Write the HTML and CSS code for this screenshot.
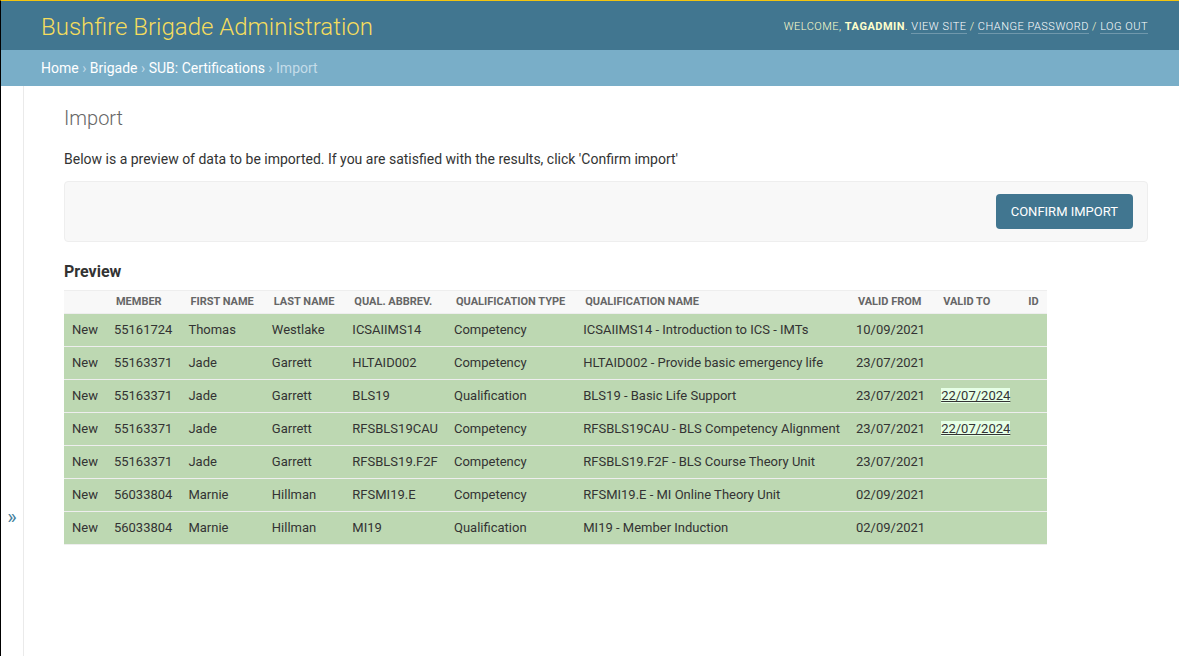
FILE: index.html
```html
<!DOCTYPE html>
<html lang="en">
<head>
<meta charset="utf-8">
<title>Import | Bushfire Brigade Administration</title>
<link rel="stylesheet" href="styles.css">
</head>
<body>
<div class="page">
  <header class="header">
    <h1 class="site-name">Bushfire Brigade Administration</h1>
    <div class="user-tools">Welcome, <strong>tagadmin</strong>. <a href="#">View site</a> / <a href="#">Change password</a> / <a href="#">Log out</a></div>
  </header>
  <nav class="breadcrumbs"><a href="#">Home</a> › <a href="#">Brigade</a> › <a href="#">SUB: Certifications</a> › Import</nav>
  <div class="main">
    <div class="nav-toggle"><span class="toggle-btn">»</span></div>
    <div class="content">
      <h1 class="page-title">Import</h1>
      <p class="intro">Below is a preview of data to be imported. If you are satisfied with the results, click 'Confirm import'</p>
      <div class="submit-row"><button class="confirm" type="button">Confirm import</button></div>
      <h2 class="preview-title">Preview</h2>
      <table class="import-preview">
        <thead>
          <tr><th></th><th>Member</th><th>First name</th><th>Last name</th><th>Qual. abbrev.</th><th>Qualification type</th><th>Qualification name</th><th>Valid from</th><th>Valid to</th><th class="last">ID</th></tr>
        </thead>
        <tbody>
          <tr class="new"><td>New</td><td>55161724</td><td>Thomas</td><td>Westlake</td><td>ICSAIIMS14</td><td>Competency</td><td>ICSAIIMS14 - Introduction to ICS - IMTs</td><td>10/09/2021</td><td></td><td></td></tr>
          <tr class="new"><td>New</td><td>55163371</td><td>Jade</td><td>Garrett</td><td>HLTAID002</td><td>Competency</td><td>HLTAID002 - Provide basic emergency life</td><td>23/07/2021</td><td></td><td></td></tr>
          <tr class="new"><td>New</td><td>55163371</td><td>Jade</td><td>Garrett</td><td>BLS19</td><td>Qualification</td><td>BLS19 - Basic Life Support</td><td>23/07/2021</td><td><ins class="diff">22/07/2024</ins></td><td></td></tr>
          <tr class="new"><td>New</td><td>55163371</td><td>Jade</td><td>Garrett</td><td>RFSBLS19CAU</td><td>Competency</td><td>RFSBLS19CAU - BLS Competency Alignment</td><td>23/07/2021</td><td><ins class="diff">22/07/2024</ins></td><td></td></tr>
          <tr class="new"><td>New</td><td>55163371</td><td>Jade</td><td>Garrett</td><td>RFSBLS19.F2F</td><td>Competency</td><td>RFSBLS19.F2F - BLS Course Theory Unit</td><td>23/07/2021</td><td></td><td></td></tr>
          <tr class="new"><td>New</td><td>56033804</td><td>Marnie</td><td>Hillman</td><td>RFSMI19.E</td><td>Competency</td><td>RFSMI19.E - MI Online Theory Unit</td><td>02/09/2021</td><td></td><td></td></tr>
          <tr class="new"><td>New</td><td>56033804</td><td>Marnie</td><td>Hillman</td><td>MI19</td><td>Qualification</td><td>MI19 - Member Induction</td><td>02/09/2021</td><td></td><td></td></tr>
        </tbody>
      </table>
    </div>
  </div>
</div>
</body>
</html>
```
FILE: styles.css
```css
html, body {
  margin: 0;
  padding: 0;
}

body {
  border-top: 1px solid #f2c40f;
  border-left: 1px solid #000;
  font-family: Roboto, "Liberation Sans", sans-serif;
  font-size: 14px;
  color: #333;
  background: #fff;
  min-height: calc(100vh - 1px);
  box-sizing: border-box;
}

a {
  text-decoration: none;
}

.header {
  display: flex;
  justify-content: space-between;
  align-items: center;
  height: 49px;
  padding: 0 31px 0 40px;
  background: #417690;
  color: #ffc;
}

.site-name {
  margin: 0;
  font-size: 24px;
  font-weight: 300;
  color: #f5dd5d;
  line-height: 28px;
  padding-top: 2px;
}

.user-tools {
  font-size: 11px;
  font-weight: 300;
  letter-spacing: 0.5px;
  text-transform: uppercase;
  color: #ffc;
  padding-top: 2px;
}

.user-tools strong {
  font-weight: 700;
}

.user-tools a {
  color: #fff;
  border-bottom: 1px solid rgba(255, 255, 255, 0.25);
}

.breadcrumbs {
  height: 36px;
  box-sizing: border-box;
  padding: 9px 31px 0 40px;
  background: #79aec8;
  color: #c4dce8;
  font-size: 14px;
  line-height: 18px;
}

.breadcrumbs a {
  color: #fff;
}

.main {
  display: flex;
  min-height: calc(100vh - 87px);
}

.nav-toggle {
  flex: 0 0 23px;
  box-sizing: border-box;
  border-right: 1px solid #eaeaea;
  display: flex;
  justify-content: center;
  padding-top: 420px;
}

.toggle-btn {
  font-size: 20px;
  line-height: 23px;
  height: 23px;
  color: #447e9b;
}

.content {
  flex: 1;
  padding: 20px 31px 20px 40px;
}

.page-title {
  margin: 0 0 20px;
  font-size: 20px;
  font-weight: 300;
  color: #666;
  line-height: normal;
}

.intro {
  margin: 0.2em 0 0.8em;
  line-height: 140%;
}

.submit-row {
  display: flex;
  justify-content: flex-end;
  padding: 12px 14px;
  margin: 0 0 20px;
  background: #f8f8f8;
  border: 1px solid #eee;
  border-radius: 4px;
}

.confirm {
  background: #417690;
  color: #fff;
  border: 0;
  border-radius: 4px;
  padding: 10px 15px;
  font-family: Roboto, "Liberation Sans", sans-serif;
  font-size: 13px;
  font-weight: 400;
  line-height: 15px;
  text-transform: uppercase;
  cursor: pointer;
}

.preview-title {
  margin: 16px 0 9px;
  font-size: 16px;
  font-weight: 700;
  color: #333;
}

.import-preview {
  border-collapse: collapse;
}

.import-preview th,
.import-preview td {
  text-align: left;
  vertical-align: top;
}

.import-preview thead th {
  padding: 5px 10px;
  font-size: 11px;
  line-height: 12px;
  font-weight: 700;
  color: #666;
  text-transform: uppercase;
  background: #f8f8f8;
  border-top: 1px solid #eee;
  border-bottom: 1px solid #eee;
  white-space: nowrap;
}

.import-preview thead th.last {
  padding-right: 8px;
}

.import-preview td {
  padding: 8px;
  font-size: 13px;
  line-height: 16px;
  border-bottom: 1px solid #eee;
  white-space: nowrap;
}

.import-preview tr.new {
  background: #bdd8b2;
}

.diff {
  background: #e6ffe6;
}
```
